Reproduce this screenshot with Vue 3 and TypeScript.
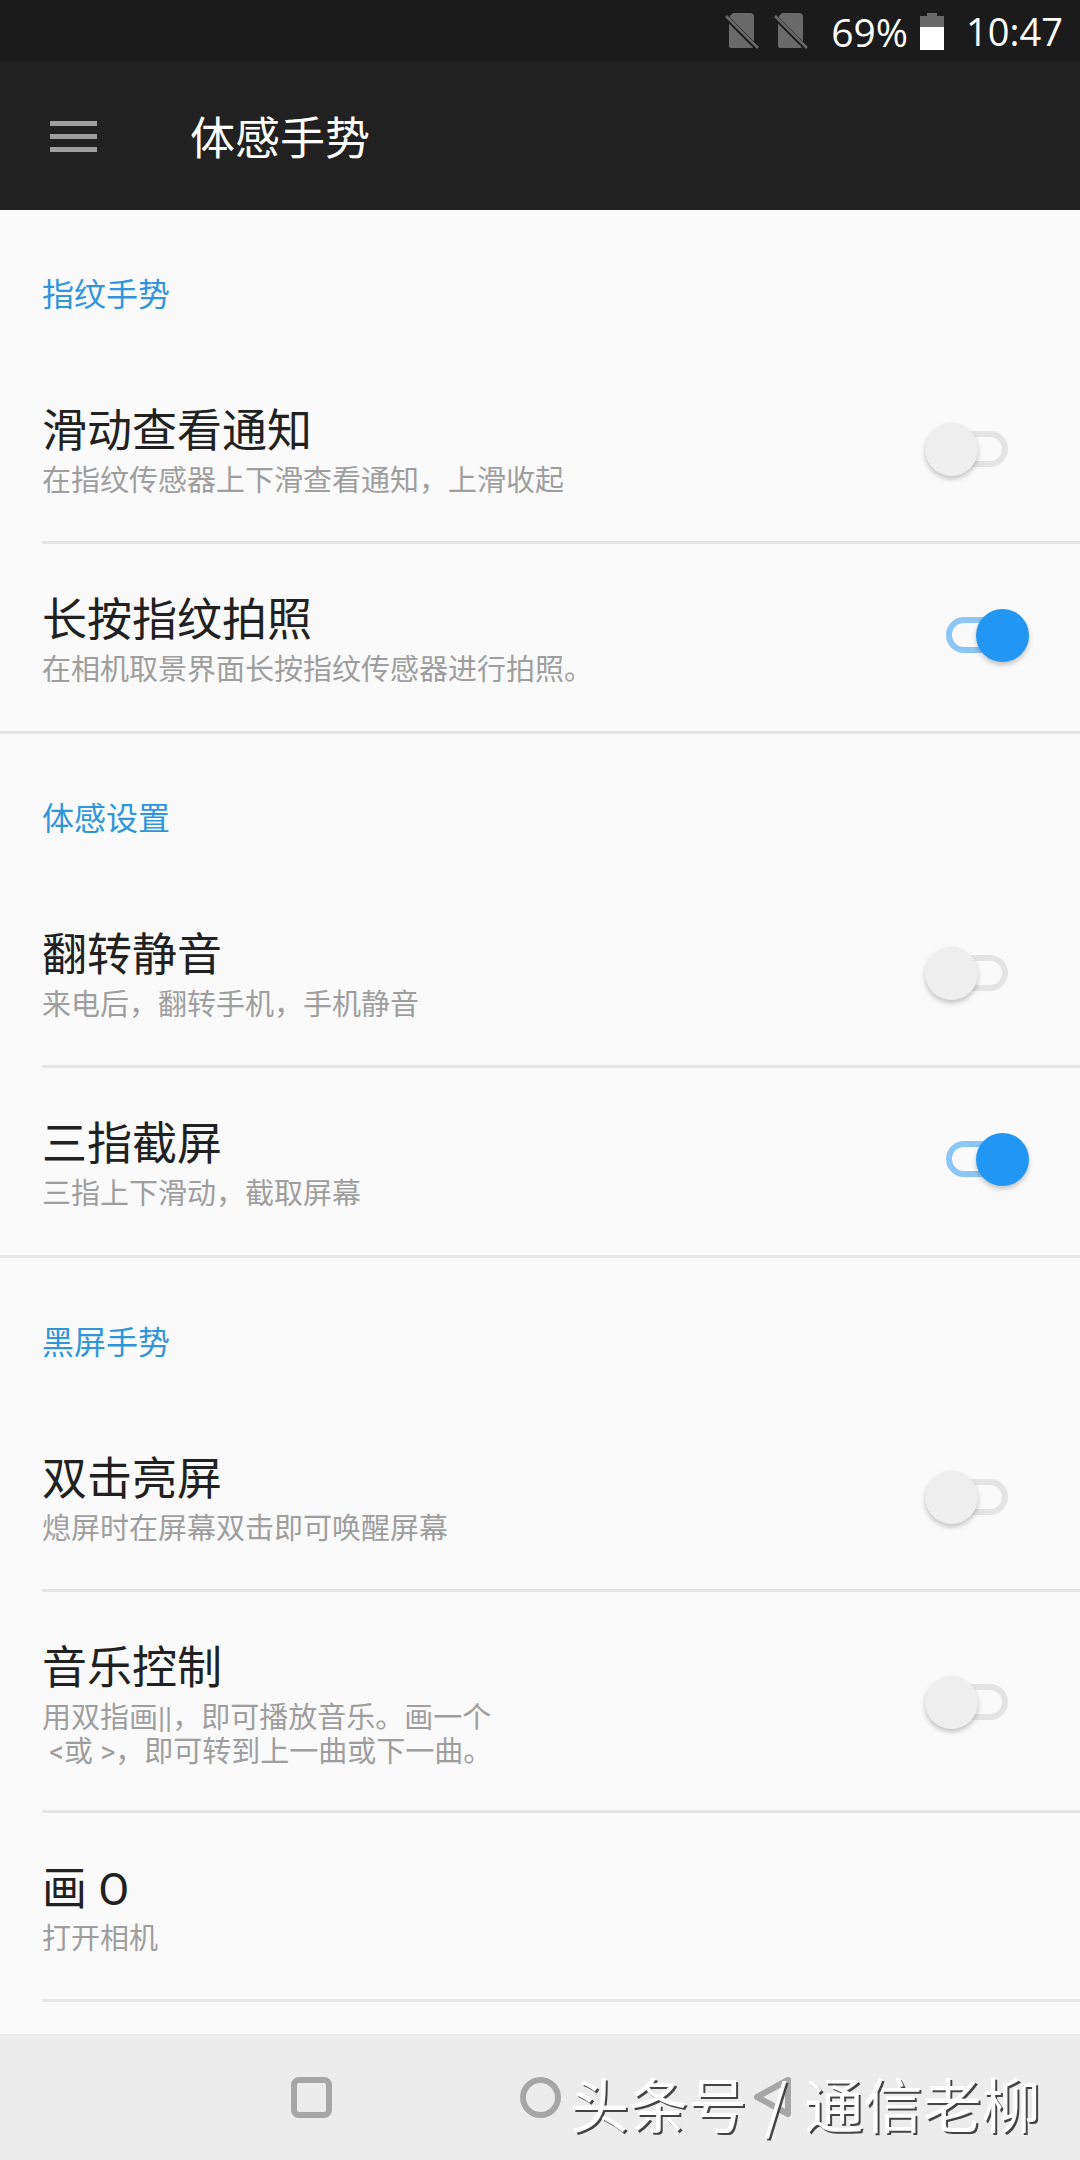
<template>
  <div class="phone">
    <div class="status-bar">
      <svg v-for="n in 2" :key="n" class="sim" viewBox="0 0 34 36">
        <path d="M8 0H25Q29 0 29 4V33Q29 35 27 35H6Q4 35 4 33V6Q4 4 5 3L7 1Q7.500 .5 8 0Z" fill="#6a6a6a" />
        <path d="M1 4L33 36" stroke="#1b1b1b" stroke-width="5" />
        <path d="M1 3L33 35" stroke="#6a6a6a" stroke-width="2.500" />
      </svg>
      <span class="percent">69%</span>
      <svg class="battery" viewBox="0 0 24 37">
        <path d="M7 0H17V3H24V37H0V3H7Z" fill="#6a6a6a" />
        <rect x="0" y="14" width="24" height="23" fill="#fff" />
      </svg>
      <span class="clock">10:47</span>
    </div>

    <header class="toolbar">
      <div class="menu-icon"><i></i><i></i><i></i></div>
      <h1>体感手势</h1>
    </header>

    <main class="content">
      <section v-for="group in groups" :key="group.name" class="group">
        <h2>{{ group.name }}</h2>
        <div v-for="row in group.rows" :key="row.title" class="row">
          <div class="row-text">
            <div class="row-title">{{ row.title }}</div>
            <div class="row-sub">{{ row.sub }}</div>
          </div>
          <div v-if="row.on !== undefined" class="switch" :class="{ on: row.on }">
            <div class="track"></div>
            <div class="thumb"></div>
          </div>
        </div>
      </section>
    </main>

    <nav class="nav-bar">
      <span class="nav-square"></span>
      <span class="nav-circle"></span>
      <svg class="nav-back" viewBox="0 0 40 42">
        <path d="M35 4L4 21L35 38Z" fill="none" stroke="#a6a6a6" stroke-width="6" stroke-linejoin="round" />
      </svg>
    </nav>

    <!-- 水印 -->
    <div class="watermark">头条号 / 通信老柳</div>
  </div>
</template>

<script setup lang="ts">
interface Row {
  title: string
  sub: string
  on?: boolean
}

interface Group {
  name: string
  rows: Row[]
}

const groups: Group[] = [
  {
    name: '指纹手势',
    rows: [
      { title: '滑动查看通知', sub: '在指纹传感器上下滑查看通知，上滑收起', on: false },
      { title: '长按指纹拍照', sub: '在相机取景界面长按指纹传感器进行拍照。', on: true },
    ],
  },
  {
    name: '体感设置',
    rows: [
      { title: '翻转静音', sub: '来电后，翻转手机，手机静音', on: false },
      { title: '三指截屏', sub: '三指上下滑动，截取屏幕', on: true },
    ],
  },
  {
    name: '黑屏手势',
    rows: [
      { title: '双击亮屏', sub: '熄屏时在屏幕双击即可唤醒屏幕', on: false },
      { title: '音乐控制', sub: '用双指画||，即可播放音乐。画一个\n <或 >，即可转到上一曲或下一曲。', on: false },
      { title: '画 O', sub: '打开相机' },
    ],
  },
]
</script>

<style>
html,
body {
  margin: 0;
  background: #fafafa;
}
</style>

<style scoped>
.phone {
  position: relative;
  width: 1080px;
  height: 2160px;
  display: flex;
  flex-direction: column;
  overflow: hidden;
  background: #fafafa;
  font-family: Roboto, "Noto Sans CJK SC", sans-serif;
}

.status-bar {
  height: 62px;
  flex: none;
  display: flex;
  align-items: center;
  justify-content: flex-end;
  padding-right: 17px;
  box-sizing: border-box;
  background: #1b1b1b;
  color: #fff;
  font-family: "Open Sans", Roboto, sans-serif;
  font-size: 38px;
}

.sim {
  width: 34px;
  height: 36px;
  margin-right: 15px;
}

.percent {
  margin-left: 8px;
  font-size: 39px;
}

.battery {
  width: 24px;
  height: 37px;
  margin-left: 12px;
}

.clock {
  margin-left: 22px;
}

.toolbar {
  height: 148px;
  flex: none;
  display: flex;
  align-items: center;
  background: #212121;
  color: #fff;
}

.menu-icon {
  width: 47px;
  margin-left: 50px;
  display: flex;
  flex-direction: column;
  gap: 8px;
}

.menu-icon i {
  display: block;
  height: 5px;
  background: #9e9e9e;
}

.toolbar h1 {
  margin: 0 0 0 93px;
  font-size: 45px;
  font-weight: 400;
  line-height: 60px;
  font-family: "Noto Sans CJK SC", sans-serif;
}

.content {
  flex: 1;
  min-height: 0;
  overflow: hidden;
}

.group {
  border-bottom: 3px solid #e6e6e6;
}

.group:last-child {
  border-bottom: none;
}

.group h2 {
  margin: 0;
  height: 145px;
  padding: 18px 0 0 42px;
  box-sizing: border-box;
  display: flex;
  align-items: center;
  font-size: 32px;
  font-weight: 400;
  color: #2f96dc;
}

.row {
  display: flex;
  align-items: center;
  justify-content: space-between;
  margin-left: 42px;
  padding-right: 51px;
  min-height: 189px;
  box-sizing: border-box;
  border-bottom: 3px solid #e6e6e6;
}

.group:not(:last-child) .row:last-child {
  min-height: 187px;
  border-bottom: none;
}

.row-text {
  align-self: flex-start;
  padding: 47px 0 41px;
}

.row-title {
  font-size: 45px;
  font-weight: 400;
  line-height: 60px;
  color: #212121;
}

.row-sub {
  font-size: 29px;
  line-height: 34px;
  margin-top: 2px;
  color: #9e9e9e;
  white-space: pre-wrap;
}

.switch {
  position: relative;
  width: 104px;
  height: 53px;
  flex: none;
  margin-top: 2px;
}

.track {
  position: absolute;
  left: 21px;
  top: 8px;
  width: 62px;
  height: 36px;
  box-sizing: border-box;
  border: 6px solid #e4e4e4;
  border-radius: 18px;
}

.thumb {
  position: absolute;
  left: 0;
  top: 0;
  width: 53px;
  height: 53px;
  border-radius: 50%;
  background: #eeeeee;
  box-shadow: 0 3px 5px rgba(0, 0, 0, 0.22);
}

.switch.on {
  margin-top: 0;
  margin-bottom: 4px;
}

.switch.on .track {
  border-color: #8cc6f6;
}

.switch.on .thumb {
  left: 51px;
  background: #2196f3;
}

.nav-bar {
  height: 126px;
  flex: none;
  position: relative;
  display: flex;
  align-items: center;
  padding-left: 291px;
  box-sizing: border-box;
  background: #ececec;
}

.nav-square {
  width: 41px;
  height: 41px;
  box-sizing: border-box;
  border: 6px solid #a6a6a6;
  border-radius: 8px;
}

.nav-circle {
  width: 41px;
  height: 41px;
  margin-left: 188px;
  box-sizing: border-box;
  border: 6px solid #a6a6a6;
  border-radius: 50%;
}

.nav-back {
  width: 40px;
  height: 42px;
  margin-left: 192px;
}

.watermark {
  position: absolute;
  left: 570px;
  bottom: 17px;
  font-family: "Noto Sans CJK SC", sans-serif;
  font-size: 59px;
  line-height: 80px;
  word-spacing: 4px;
  color: #fff;
  white-space: nowrap;
  text-shadow: 2px 2px 0 #444;
}
</style>
